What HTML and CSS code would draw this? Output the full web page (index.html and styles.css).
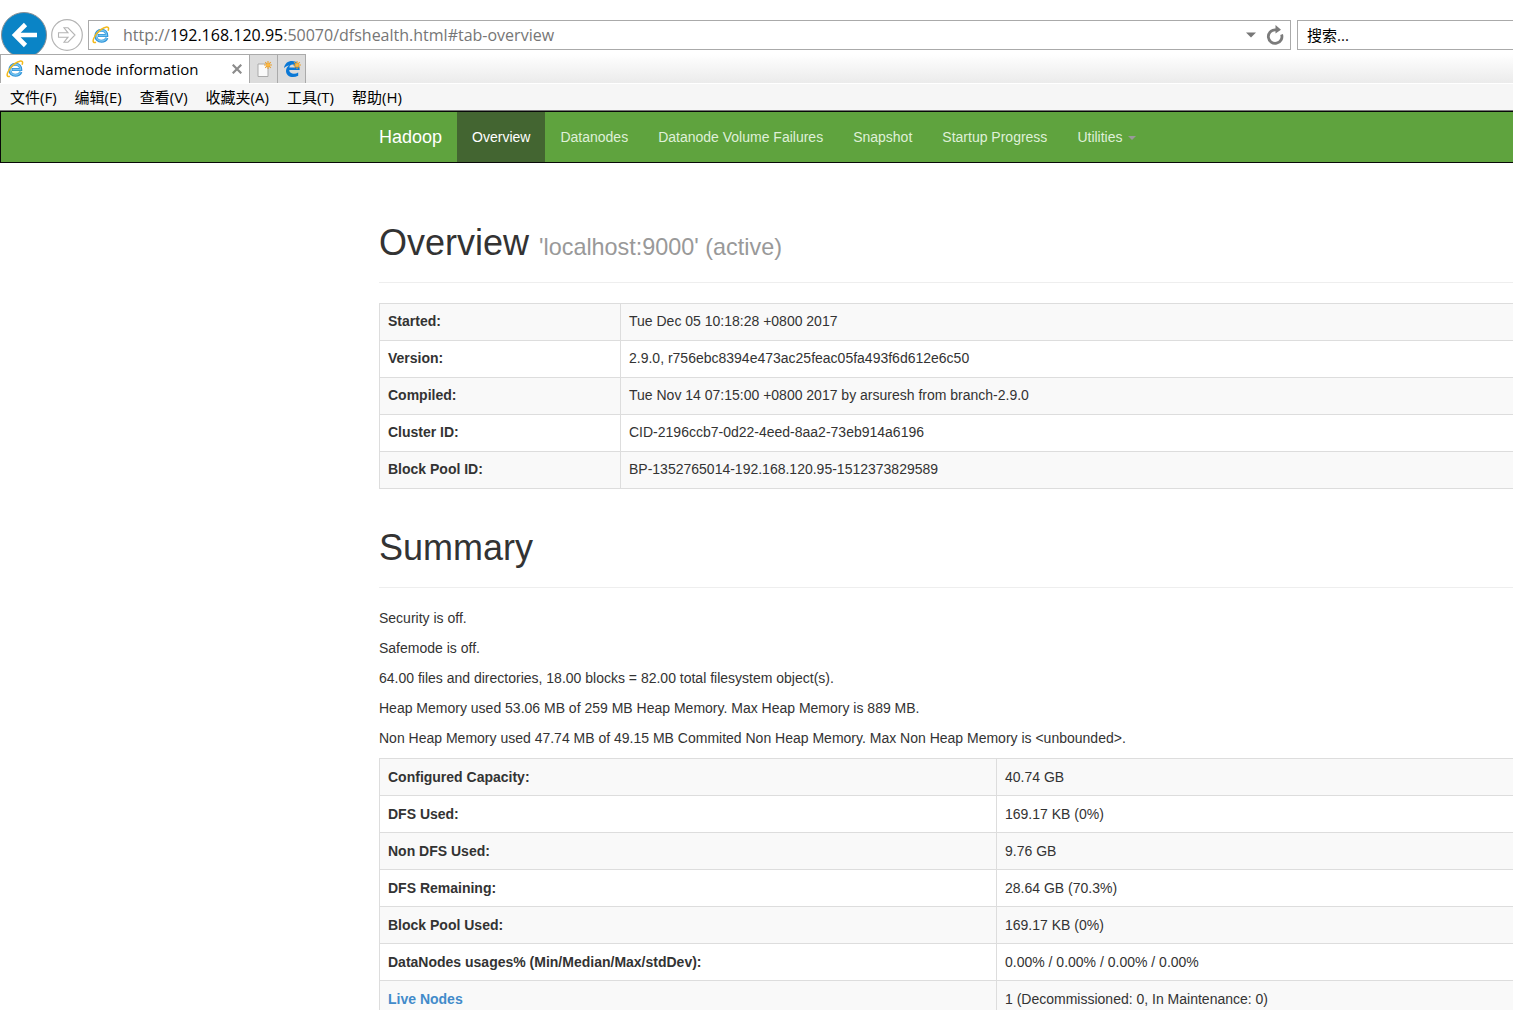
FILE: index.html
```html
<!DOCTYPE html>
<html lang="zh-CN">
<head>
<meta charset="utf-8">
<title>Namenode information</title>
<link rel="stylesheet" href="styles.css">
</head>
<body>
<svg class="symbols" aria-hidden="true">
  <symbol id="ie" viewBox="0 0 18 18">
    <path d="M15 11.800C13.800 14.300 11.800 15.300 9.500 15.300 6 15.300 3.900 12.900 3.900 9.700S6.300 4.200 9.500 4.200c3.300 0 5.400 2.200 5.300 5.400H6" fill="none" stroke="#2f93d8" stroke-width="3"/>
    <path d="M14.500 12C13.500 14 11.800 15 9.500 15 6 15 4.200 12.700 4.200 9.700S6.500 4.500 9.500 4.500c3 0 5 2 5 5H6.500" fill="none" stroke="#74c4f0" stroke-width="1.300"/>
    <path d="M4 16.200C.8 17.500.3 14.800 2.400 11 5 6 11 1.200 14.600.900c2.300-.2 2.300 1.800 1.500 3.800" fill="none" stroke="#f3b91c" stroke-width="1.500"/>
  </symbol>
  <symbol id="spark" viewBox="0 0 8 8">
    <path d="M4 0v8M0 4h8M1.200 1.200l5.600 5.600M6.800 1.200 1.200 6.800" stroke="#e8a030" stroke-width="1.100"/>
    <circle cx="4" cy="4" r="1.800" fill="#ffb93d"/>
  </symbol>
</svg>
<header class="browser">
  <div class="address-row">
    <button class="back" aria-label="后退">
      <svg width="48" height="48" viewBox="0 0 48 48"><circle cx="24" cy="23" r="22.500" fill="#0a84c6" stroke="#8a8f93"/><path d="M37 23H15M25.500 12.500 15 23 25.500 33.500" fill="none" stroke="#fff" stroke-width="4.600"/></svg>
    </button>
    <button class="forward" aria-label="前进">
      <svg width="32" height="32" viewBox="0 0 32 32"><circle cx="16" cy="16" r="15.300" fill="#fff" stroke="#b4b4b4" stroke-width="1.200"/><path d="M7.500 13.800h9.500l-4-5h4l7 7.200-7 7.200h-4l4-5H7.500z" fill="none" stroke="#b4b4b4" stroke-width="1.100"/></svg>
    </button>
    <div class="address">
      <svg class="site-icon" width="18" height="18"><use href="#ie"/></svg>
      <span class="url">http://<b>192.168.120.95</b>:50070/dfshealth.html#tab-overview</span>
      <button aria-label="显示历史"><svg width="10" height="6" viewBox="0 0 10 6"><path d="M0 .5h10L5 5.500z" fill="#777"/></svg></button>
      <button aria-label="刷新"><svg width="18" height="20" viewBox="0 0 18 20"><path d="M15.600 9.500A6.800 6.800 0 1 1 9 4.800h2" fill="none" stroke="#7b7b7b" stroke-width="2.800"/><path d="M9.500 0v8.500L15 4.800z" fill="#7b7b7b"/></svg></button>
    </div>
    <input class="search" type="text" aria-label="搜索" placeholder="搜索...">
  </div>
  <div class="tab-row">
    <div class="tab">
      <svg width="18" height="18"><use href="#ie"/></svg>
      <span class="tab-title">Namenode information</span>
      <button aria-label="关闭标签页"><svg width="10" height="10" viewBox="0 0 10 10"><path d="m.7.7 8.600 8.600M9.300.7.700 9.300" stroke="#8c8c8c" stroke-width="2.200"/></svg></button>
    </div>
    <button class="tab-button" aria-label="新建标签页"><svg width="18" height="18" viewBox="0 0 18 18"><path d="M3 4h10v12.500H3z" fill="#fafafa" stroke="#aaa"/><use href="#spark" x="9" y="1" width="8" height="8"/></svg></button>
    <button class="tab-button" aria-label="在 Microsoft Edge 中打开"><svg width="18" height="18" viewBox="0 0 18 18"><path d="M1 8.300C1.500 3.500 5 1 9 1c5 0 8 3.500 7.600 9H6.200c.2 4 5.600 4.600 9 2.500v3.300C9.500 18.700 3 16.500 3 11c0-2.800 1.500-4.600 3.500-5.500C4 5.600 2 7 1 8.300zM6.300 7.500h5.600c-.1-4-5-3.800-5.600 0z" fill="#0a78d6"/><use href="#spark" x="10" y="1" width="8" height="8"/></svg></button>
  </div>
  <div class="menu-row">
    <button>文件(F)</button><button>编辑(E)</button><button>查看(V)</button><button>收藏夹(A)</button><button>工具(T)</button><button>帮助(H)</button>
  </div>
</header>
<nav class="navbar">
  <a class="brand" href="#">Hadoop</a>
  <a class="active" href="#tab-overview">Overview</a>
  <a href="#tab-datanode">Datanodes</a>
  <a href="#tab-volume-failures">Datanode Volume Failures</a>
  <a href="#tab-snapshot">Snapshot</a>
  <a href="#tab-startup">Startup Progress</a>
  <a href="#utilities">Utilities <span class="caret"></span></a>
</nav>
<main class="content">
  <h1>Overview <small>'localhost:9000' (active)</small></h1>
  <table class="overview">
    <tr><th scope="row">Started:</th><td>Tue Dec 05 10:18:28 +0800 2017</td></tr>
    <tr><th scope="row">Version:</th><td>2.9.0, r756ebc8394e473ac25feac05fa493f6d612e6c50</td></tr>
    <tr><th scope="row">Compiled:</th><td>Tue Nov 14 07:15:00 +0800 2017 by arsuresh from branch-2.9.0</td></tr>
    <tr><th scope="row">Cluster ID:</th><td>CID-2196ccb7-0d22-4eed-8aa2-73eb914a6196</td></tr>
    <tr><th scope="row">Block Pool ID:</th><td>BP-1352765014-192.168.120.95-1512373829589</td></tr>
  </table>
  <h1>Summary</h1>
  <p>Security is off.</p>
  <p>Safemode is off.</p>
  <p>64.00 files and directories, 18.00 blocks = 82.00 total filesystem object(s).</p>
  <p>Heap Memory used 53.06 MB of 259 MB Heap Memory. Max Heap Memory is 889 MB.</p>
  <p>Non Heap Memory used 47.74 MB of 49.15 MB Commited Non Heap Memory. Max Non Heap Memory is &lt;unbounded&gt;.</p>
  <table class="summary">
    <tr><th scope="row">Configured Capacity:</th><td>40.74 GB</td></tr>
    <tr><th scope="row">DFS Used:</th><td>169.17 KB (0%)</td></tr>
    <tr><th scope="row">Non DFS Used:</th><td>9.76 GB</td></tr>
    <tr><th scope="row">DFS Remaining:</th><td>28.64 GB (70.3%)</td></tr>
    <tr><th scope="row">Block Pool Used:</th><td>169.17 KB (0%)</td></tr>
    <tr><th scope="row">DataNodes usages% (Min/Median/Max/stdDev):</th><td>0.00% / 0.00% / 0.00% / 0.00%</td></tr>
    <tr><th scope="row"><a href="#tab-datanode">Live Nodes</a></th><td>1 (Decommissioned: 0, In Maintenance: 0)</td></tr>
  </table>
</main>
</body>
</html>
```
FILE: styles.css
```css
* { box-sizing: border-box; }
html { scrollbar-width: none; }
body {
  margin: 0;
  font: 14px/20px "Liberation Sans", Arial, sans-serif;
  color: #333;
  background: #fff;
}
button { border: 0; padding: 0; background: none; font: inherit; color: inherit; }
svg { display: block; flex: none; }
.symbols { position: absolute; width: 0; height: 0; }

/* Browser chrome */
.browser { font-family: "Open Sans", "Noto Sans CJK SC", sans-serif; color: #000; }
.address-row { display: flex; align-items: flex-start; height: 54px; padding-top: 12px; overflow: hidden; }
.forward { margin: 7px 5px 0 3px; }
.address {
  display: flex; align-items: center; flex: 1; height: 30px; margin-top: 8px;
  padding: 0 6px 0 3px; border: 1px solid #aaa; gap: 10px;
}
.url { flex: 1; margin-left: 3px; font-size: 16px; color: #767676; white-space: nowrap; }
.url b { font-weight: 400; color: #000; }
.search {
  width: 216px; height: 30px; margin: 8px 0 0 6px; padding: 0 9px;
  border: 1px solid #aaa; border-right: 0; border-radius: 0; background: #fff;
  font: 15px/20px "Open Sans", "Noto Sans CJK SC", sans-serif;
}
.search::placeholder { color: #000; opacity: 1; }
.tab-row { display: flex; height: 29px; background: linear-gradient(#fff, #ebebeb); }
.tab {
  display: flex; align-items: center; width: 250px; padding: 0 7px 0 5px; gap: 10px;
  border: 1px solid #aaa; border-bottom: 0; background: #fff;
}
.tab-title { flex: 1; font-size: 15px; white-space: nowrap; }
.tab-button {
  display: flex; align-items: center; justify-content: center; width: 28px;
  border: 1px solid #aaa; border-width: 1px 1px 0 0; background: #dcdcdc;
}
.menu-row {
  display: flex; height: 28px; padding: 0 1px; border-top: 1px solid #fff;
  border-bottom: 1px solid #777; background: #f6f6f6;
}
.menu-row button { padding: 0 9px; font-size: 15px; white-space: nowrap; }

/* Site navigation */
.navbar { display: flex; height: 52px; padding-left: 378px; border: 1px solid #080808; border-right: 0; background: #5fa33e; }
.navbar a { padding: 15px; color: #dff0d8; text-decoration: none; white-space: nowrap; }
.navbar .brand { padding-left: 0; font-size: 18px; color: #fff; }
.navbar .active { background: #436531; color: #fff; }
.caret {
  display: inline-block; margin-left: 2px; vertical-align: middle;
  border: 4px solid transparent; border-top-color: #999; border-bottom: 0;
}

/* Page content */
.content { padding: 21px 0 0 379px; }
h1 {
  margin: 40px 0 20px; padding-bottom: 21px; border-bottom: 1px solid #eee;
  font-size: 36px; line-height: 37px; font-weight: 400;
}
h1 small { font-size: 65%; line-height: 1; color: #999; }
p { margin: 0 0 10px; }
table { width: 100%; border-collapse: collapse; table-layout: fixed; }
tr:nth-child(odd) { background: #f9f9f9; }
th, td { padding: 8px; border: 1px solid #ddd; text-align: left; }
td { border-right: 0; }
.overview th, .overview td { padding: 7px 8px 9px; }
.overview th { width: 241px; }
.summary th { width: 617px; }
th a { color: #428bca; text-decoration: none; }
```
